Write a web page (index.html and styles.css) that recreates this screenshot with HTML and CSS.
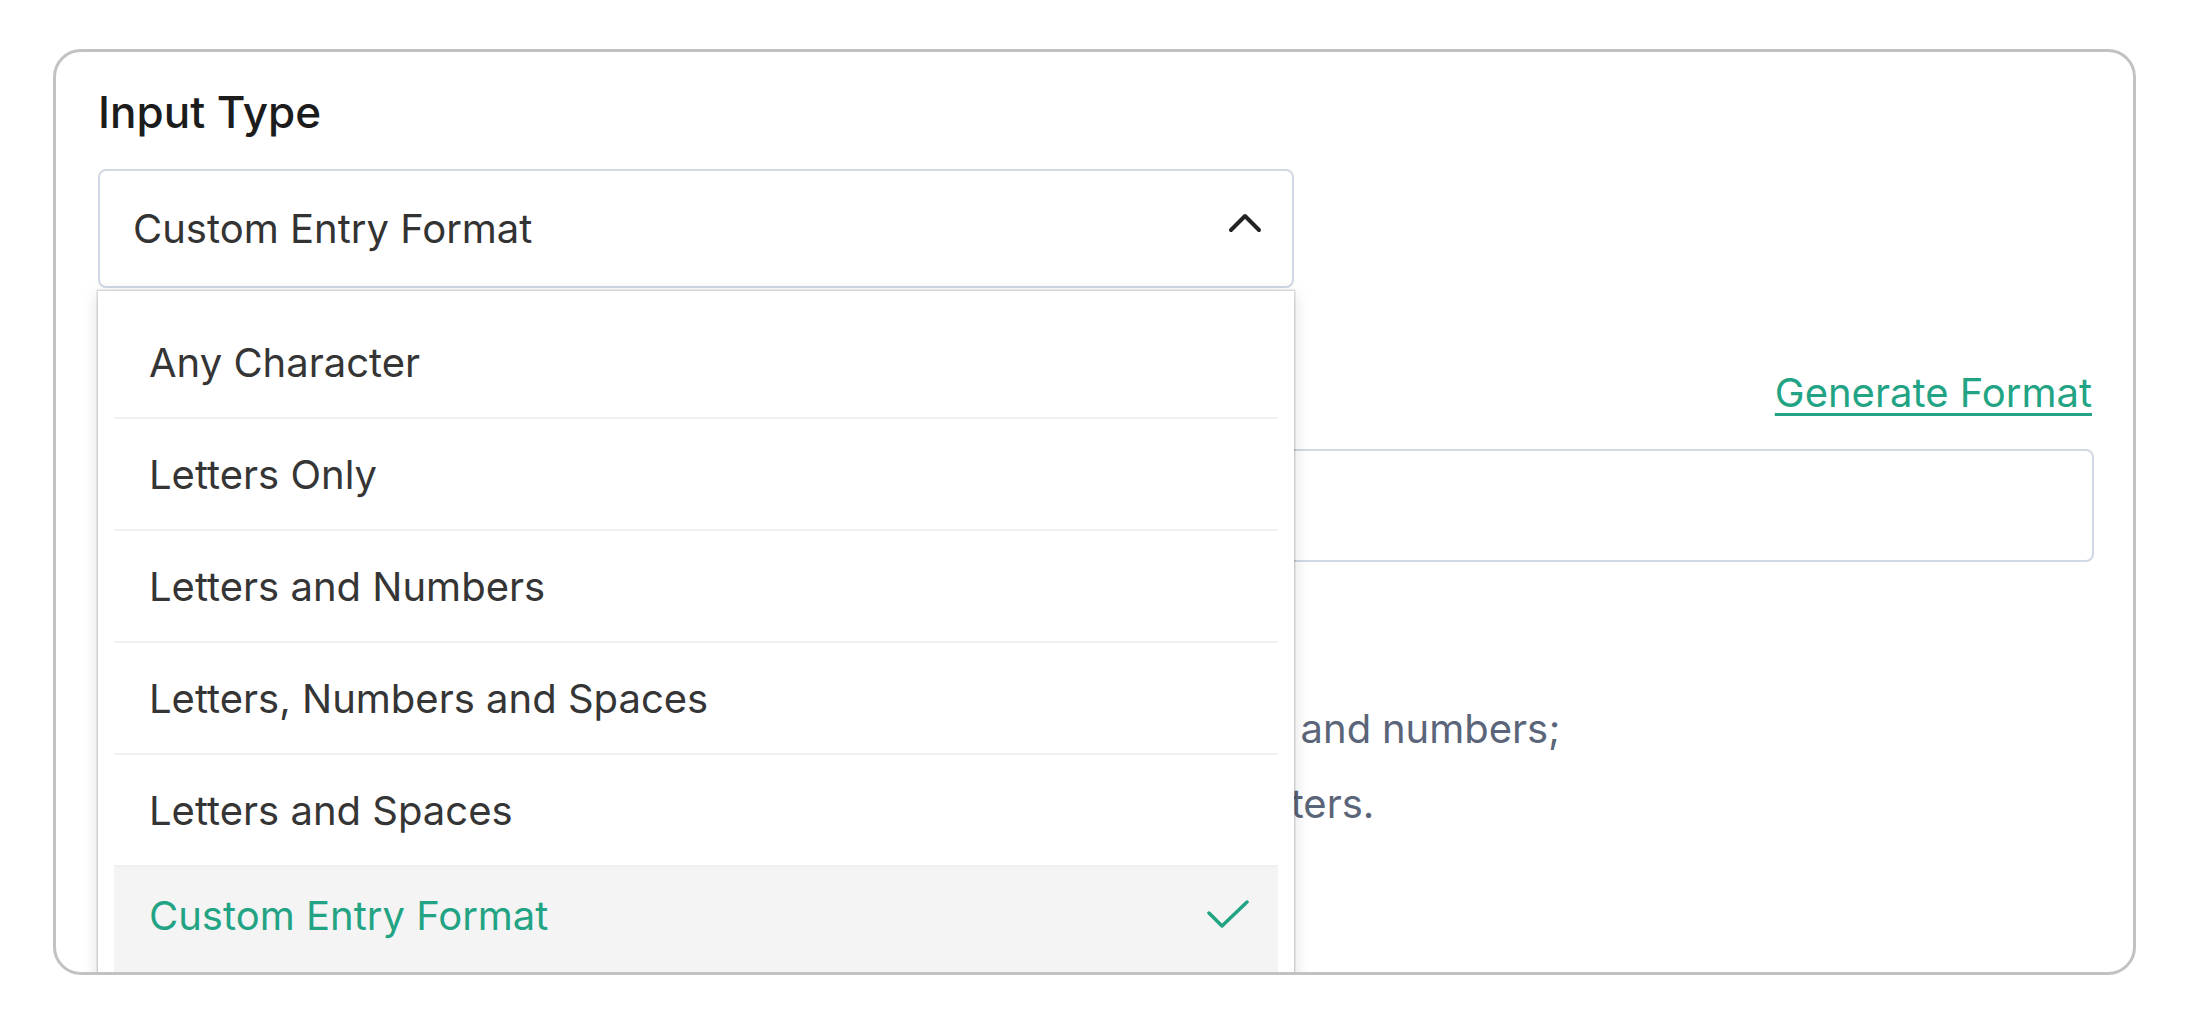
FILE: index.html
```html
<!DOCTYPE html>
<html lang="en">
<head>
<meta charset="utf-8">
<title>Input Type</title>
<link rel="stylesheet" href="styles.css">
</head>
<body>
<div class="card">
  <div class="field">
    <div class="title">Input Type</div>
    <div class="select-wrap">
      <div class="select">
        <span class="select-value">Custom Entry Format</span>
        <svg class="chevron" width="34" height="20" viewBox="0 0 34 20"><polyline points="3,17 17,3 31,17" fill="none" stroke="#222" stroke-width="4" stroke-linecap="round" stroke-linejoin="round"/></svg>
      </div>
      <ul class="dropdown">
        <li class="option">Any Character</li>
        <li class="option">Letters Only</li>
        <li class="option">Letters and Numbers</li>
        <li class="option">Letters, Numbers and Spaces</li>
        <li class="option">Letters and Spaces</li>
        <li class="option selected">Custom Entry Format
          <svg class="check" width="44" height="30" viewBox="0 0 44 30"><polyline points="3,13 16,26 41,2" fill="none" stroke="#22a484" stroke-width="3.5" stroke-linecap="round" stroke-linejoin="round"/></svg>
        </li>
      </ul>
    </div>
  </div>

  <div class="field format-field">
    <div class="label-row">
      <span class="label">Entry Format</span>
      <a class="link" href="#">Generate Format</a>
    </div>
    <div class="input"></div>
    <div class="help">
      <p class="help-title">Format instructions:</p>
      <p class="help-line line-one">1. Use A to represent letters, the digit 9 to represent both letters and numbers;</p>
      <p class="help-line line-two">2. The entry format can contain a maximum of forty-two characters.</p>
    </div>
  </div>
</div>
</body>
</html>
```

FILE: styles.css
```css
* { box-sizing: border-box; }

html, body {
  margin: 0;
  padding: 0;
  background: #ffffff;
}

body {
  font-family: "Inter", "Liberation Sans", sans-serif;
  color: #333333;
}

.card {
  margin: 49px 0 0 53px;
  width: 2083px;
  height: 926px;
  border: 3px solid #c2c2c2;
  border-radius: 28px;
  padding: 36px 39px 0 42px;
  overflow: hidden;
  background: #ffffff;
}

.title {
  font-size: 44px;
  line-height: 48px;
  font-weight: 500;
  color: #1c1c1c;
}

.select-wrap {
  position: relative;
  width: 1196px;
  margin-top: 33px;
  z-index: 2;
}

.select {
  height: 119px;
  border: 2px solid #cfd8e3;
  border-radius: 8px;
  display: flex;
  align-items: center;
  justify-content: space-between;
  padding: 0 30px 0 33px;
}

.select-value {
  font-size: 40px;
  color: #333333;
}

.chevron {
  margin-top: -12px;
}

.dropdown {
  position: absolute;
  top: 122px;
  left: 0;
  right: 0;
  margin: 0;
  padding: 16px 16px;
  list-style: none;
  background: #ffffff;
  box-shadow: 0 0 0 1.5px rgba(0, 0, 0, 0.13), 0 4px 16px rgba(0, 0, 0, 0.14);
}

.option {
  height: 112px;
  display: flex;
  align-items: center;
  justify-content: space-between;
  padding: 0 28px 0 35px;
  font-size: 40px;
  color: #353535;
  border-bottom: 2px solid #f1f1f1;
}

.option.selected {
  background: #f4f4f4;
  color: #22a484;
  border-bottom: none;
  padding-bottom: 16px;
}

.format-field {
  margin-top: 80px;
}

.label-row {
  display: flex;
  justify-content: space-between;
  align-items: center;
  height: 48px;
}

.label {
  font-size: 40px;
  color: #1c1c1c;
}

.link {
  font-size: 40px;
  color: #22a484;
  text-decoration: underline;
  text-decoration-thickness: 3px;
  text-underline-offset: 6px;
  margin-right: 2px;
}

.input {
  margin-top: 33px;
  height: 113px;
  border: 2px solid #cfd8e3;
  border-radius: 8px;
}

.help {
  margin-top: 54px;
}

.help p {
  margin: 0;
  font-size: 40px;
  line-height: 75px;
  color: #5b6579;
  white-space: nowrap;
}

.help .line-one {
  word-spacing: -0.5px;
}

.help .line-two {
  word-spacing: -0.9px;
}
```
